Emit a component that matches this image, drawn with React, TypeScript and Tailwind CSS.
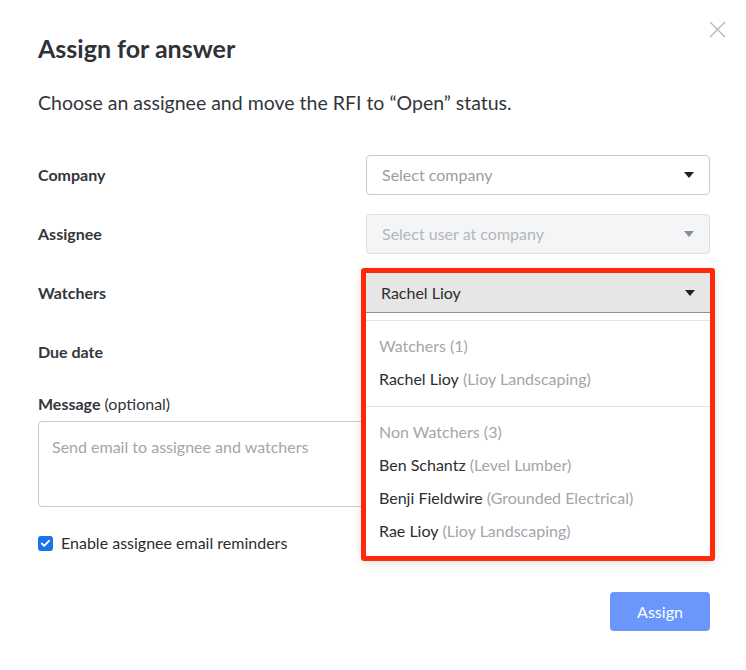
import { Check } from "lucide-react"

function Caret({ muted }: { muted?: boolean }) {
  return (
    <svg width="10" height="6" viewBox="0 0 10 6" className={muted ? "fill-[#8a8d91]" : "fill-[#222]"}>
      <path d="M0 0h10L5 6z" />
    </svg>
  )
}

export default function App() {
  return (
    <div className="relative w-[746px] h-[670px] bg-white text-[#33363b] font-['Lato','Liberation_Sans',sans-serif]">
      {/* Close */}
      <button className="absolute right-[20px] top-[21px] w-[17px] h-[17px]">
        <svg viewBox="0 0 17 17" className="w-[17px] h-[17px] stroke-[#b5b5b5]" strokeWidth="1.3">
          <path d="M1 1l15 15M16 1L1 16" />
        </svg>
      </button>

      <div className="pl-[38px] pr-[36px] pt-[33px]">
        <h1 className="text-[25px] leading-[30px] font-bold text-[#2f3237]">Assign for answer</h1>
        <p className="mt-[27px] text-[19.5px] leading-[26px] text-[#33363b]">
          Choose an assignee and move the RFI to “Open” status.
        </p>

        {/* Form rows */}
        <div className="mt-[39px] flex flex-col gap-[19px]">
          <div className="flex items-center h-[40px]">
            <label className="w-[328px] text-[16px] font-bold">Company</label>
            <div className="flex-1 h-[40px] flex items-center justify-between pl-[15px] pr-[15px] border border-[#c9cbce] rounded-[4px] bg-white">
              <span className="text-[16px] text-[#9a9da1]">Select company</span>
              <Caret />
            </div>
          </div>

          <div className="flex items-center h-[40px]">
            <label className="w-[328px] text-[16px] font-bold">Assignee</label>
            <div className="flex-1 h-[40px] flex items-center justify-between pl-[15px] pr-[15px] border border-[#dcdee0] rounded-[4px] bg-[#f4f5f6]">
              <span className="text-[16px] text-[#b3b6b9]">Select user at company</span>
              <Caret muted />
            </div>
          </div>

          <div className="flex items-center h-[40px]">
            <label className="w-[328px] text-[16px] font-bold">Watchers</label>
            <div className="relative flex-1 z-10">
              <div className="h-[40px] flex items-center justify-between pl-[15px] pr-[15px] bg-[#e6e6e6] border-b border-[#8d8f92]">
                <span className="text-[16px] text-[#2b2d31]">Rachel Lioy</span>
                <Caret />
              </div>
              {/* Menu */}
              <div className="absolute left-0 right-0 top-full h-[243px] bg-white">
                <div className="mt-[7px] border-t border-[#e2e3e5] pt-[8px] pb-[11px] border-b">
                  <div className="h-[33px] flex items-center pl-[13px] text-[16px] text-[#a3a6aa]">Watchers (1)</div>
                  <div className="h-[33px] flex items-center pl-[13px] text-[16px] text-[#2b2d31]">
                    Rachel Lioy<span className="ml-[4px] text-[#a3a6aa]">(Lioy Landscaping)</span>
                  </div>
                </div>
                <div className="pt-[8px]">
                  <div className="h-[33px] flex items-center pl-[13px] text-[16px] text-[#a3a6aa]">Non Watchers (3)</div>
                  <div className="h-[33px] flex items-center pl-[13px] text-[16px] text-[#2b2d31]">
                    Ben Schantz<span className="ml-[4px] text-[#a3a6aa]">(Level Lumber)</span>
                  </div>
                  <div className="h-[33px] flex items-center pl-[13px] text-[16px] text-[#2b2d31]">
                    Benji Fieldwire<span className="ml-[4px] text-[#a3a6aa]">(Grounded Electrical)</span>
                  </div>
                  <div className="h-[33px] flex items-center pl-[13px] text-[16px] text-[#2b2d31]">
                    Rae Lioy<span className="ml-[4px] text-[#a3a6aa]">(Lioy Landscaping)</span>
                  </div>
                </div>
              </div>
              {/* Highlight frame */}
              <div className="absolute -left-[5px] -right-[5px] -top-[5px] h-[293px] border-[5px] border-[#ff2a0a] rounded-[3px] shadow-[0_2px_8px_rgba(0,0,0,0.12)] pointer-events-none" />
            </div>
          </div>

          <div className="flex items-center h-[40px]">
            <label className="w-[328px] text-[16px] font-bold">Due date</label>
            <div className="flex-1 h-[40px] border border-[#c9cbce] rounded-[4px]" />
          </div>
        </div>

        {/* Message */}
        <div className="mt-[22px]">
          <div className="text-[16px] leading-[20px]">
            <span className="font-bold">Message</span> (optional)
          </div>
          <div className="mt-[7px] h-[86px] border border-[#c9cbce] rounded-[4px] px-[13px] pt-[13px] text-[16px] text-[#a3a6aa]">
            Send email to assignee and watchers
          </div>
        </div>

        <label className="mt-[24px] flex items-center gap-[8px] text-[16px] text-[#2b2d31]">
          <span className="w-[15px] h-[15px] rounded-[3px] bg-[#1a73e8] flex items-center justify-center">
            <Check className="w-[11px] h-[11px] text-white" strokeWidth={4} />
          </span>
          Enable assignee email reminders
        </label>

        <div className="mt-[37px] flex justify-end">
          <button className="w-[100px] h-[39px] rounded-[4px] bg-[#6b97fd] text-white text-[16px]">Assign</button>
        </div>
      </div>
    </div>
  )
}
